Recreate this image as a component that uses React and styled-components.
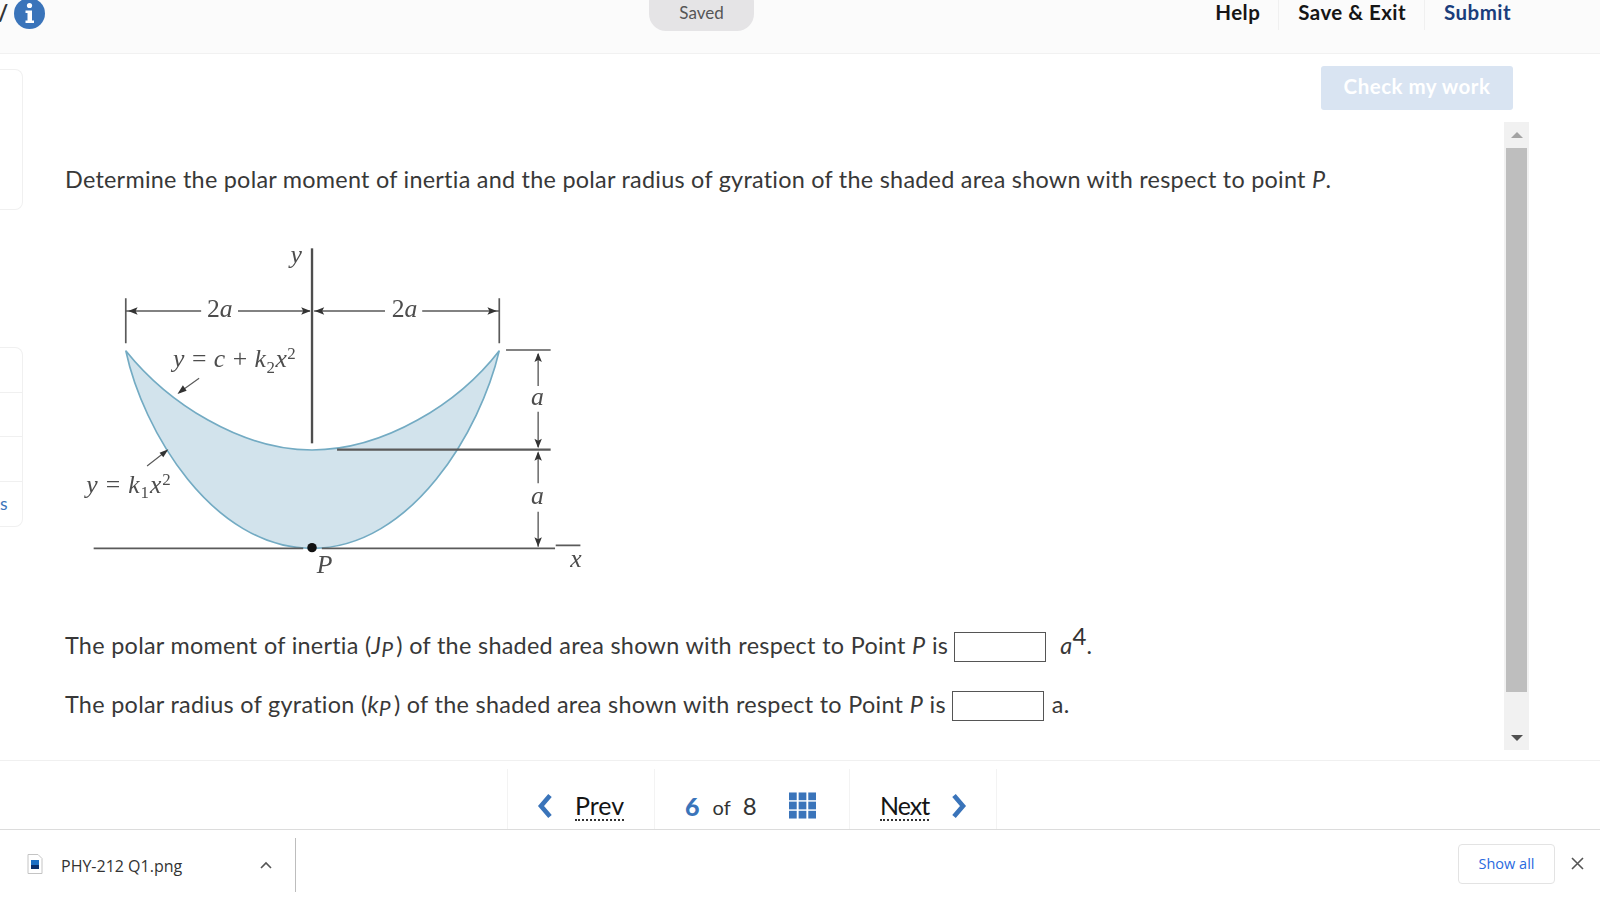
import React from "react";
import styled, { createGlobalStyle } from "styled-components";

const Global = createGlobalStyle`
  html, body { margin: 0; padding: 0; background: #fff; }
  body { font-family: "Lato", "Open Sans", sans-serif; color: #333; }
  * { box-sizing: border-box; }
`;

const Page = styled.div`
  width: 1600px;
  height: 900px;
  overflow: hidden;
  display: flex;
  flex-direction: column;
  background: #fff;
`;

const Header = styled.header`
  height: 54px;
  flex: none;
  display: flex;
  align-items: flex-start;
  background: #fbfbfb;
  border-bottom: 1px solid #f1f1f1;
  overflow: hidden;
`;
const Slash = styled.span`
  width: 16px;
  margin-left: -2px;
  padding-right: 0;
  font-size: 22px;
  font-weight: 700;
  line-height: 26px;
  color: #333;
  flex: none;
`;
const InfoIcon = styled.svg`
  width: 31px;
  height: 31px;
  margin-top: -2px;
  flex: none;
`;
const Saved = styled.div`
  margin-left: 604px;
  margin-top: -15px;
  width: 105px;
  height: 46px;
  padding-top: 15px;
  border-radius: 17px;
  background: #e5e4e6;
  color: #555;
  font-size: 17px;
  line-height: 25px;
  text-align: center;
`;
const HeaderNav = styled.nav`
  margin-left: auto;
  margin-right: 89px;
  display: flex;
`;
const HeaderLink = styled.a`
  font-size: 20.5px;
  font-weight: 700;
  letter-spacing: 0.45px;
  line-height: 25px;
  height: 30px;
  color: ${(p) => p.$color || "#151515"};
  padding: 0 18px 0 19px;
  border-left: ${(p) => (p.$first ? "none" : "1px solid #f0f0f0")};
  &:last-child { padding-right: 0; }
`;

const Main = styled.main`
  flex: 1;
  min-height: 0;
  display: flex;
`;
const Rail = styled.aside`
  width: 23px;
  flex: none;
  display: flex;
  flex-direction: column;
`;
const RailCard = styled.div`
  margin-top: ${(p) => p.$top}px;
  height: ${(p) => p.$height}px;
  border: 1px solid #f0f0f0;
  border-left: none;
  border-radius: 0 8px 8px 0;
  display: flex;
  flex-direction: column;
`;
const RailRow = styled.div`
  flex: 1;
  border-top: ${(p) => (p.$first ? "none" : "1px solid #f0f0f0")};
  color: #3a74ba;
  font-size: 17.5px;
  line-height: 44px;
`;
const Workspace = styled.div`
  flex: 1;
  min-width: 0;
  display: flex;
  flex-direction: column;
  padding: 12px 72px 10px 42px;
`;
const ActionRow = styled.div`
  display: flex;
  justify-content: flex-end;
  padding-right: 15px;
`;
const CheckButton = styled.button`
  width: 192px;
  height: 44px;
  padding: 0 0 5px;
  border: none;
  border-radius: 3px;
  background: #d9e4f2;
  color: #fff;
  font-family: inherit;
  font-size: 20.5px;
  font-weight: 700;
  letter-spacing: 0.5px;
`;
const QuestionRow = styled.div`
  flex: 1;
  min-height: 0;
  margin-top: 12px;
  display: flex;
`;
const Question = styled.div`
  flex: 1;
  min-width: 0;
  padding-top: 42px;
  font-size: 23.4px;
  letter-spacing: 0.26px;
  line-height: 30px;
  color: #383838;
`;
const Prompt = styled.p`
  margin: 0;
`;
const Figure = styled.svg`
  display: block;
  width: 530px;
  height: 360px;
  margin: 36px 0 0 5px;
  filter: blur(0.35px);
`;
const AnswerLine = styled.p`
  margin: ${(p) => p.$top}px 0 0;
  height: 30px;
  display: flex;
  align-items: center;
  white-space: pre;
  word-spacing: 0.2px;
`;
const Small = styled.span`
  font-size: 21px;
  font-style: italic;
  position: relative;
  top: 4px;
  margin-right: 3px;
`;
const Answer = styled.input`
  width: 92px;
  height: 30px;
  margin: 3px 0 0 ${(p) => p.$left}px;
  border: 1px solid #555;
  background: #fff;
  padding: 0;
`;
const Unit = styled.span`
  margin-left: ${(p) => p.$left}px;
`;
const Power = styled.span`
  font-size: 24px;
  position: relative;
  top: -9px;
  color: #333;
`;

const Scrollbar = styled.div`
  width: 25px;
  margin-right: -1px;
  flex: none;
  background: #f1f1f1;
  display: flex;
  flex-direction: column;
  align-items: center;
`;
const ScrollButton = styled.div`
  height: ${(p) => p.$height}px;
  flex: none;
  display: flex;
  align-items: center;
  justify-content: center;
`;
const ScrollThumb = styled.div`
  width: 21px;
  height: 544px;
  flex: none;
  background: #bebebe;
`;
const ScrollSpacer = styled.div`
  flex: 1;
`;
const Arrow = styled.div`
  width: 0;
  height: 0;
  border-left: 6px solid transparent;
  border-right: 6px solid transparent;
  ${(p) => (p.$down ? "border-top: 6px solid #505050;" : "border-bottom: 6px solid #a3a3a3;")}
`;

const Pager = styled.nav`
  height: 69px;
  flex: none;
  display: flex;
  padding: 8px 0 0 507px;
  border-top: 1px solid #f0f0f0;
`;
const PagerCell = styled.div`
  width: ${(p) => p.$width}px;
  display: flex;
  align-items: center;
  gap: ${(p) => p.$gap || 0}px;
  padding-top: 13px;
  padding-left: ${(p) => p.$pad || 0}px;
  border-left: 1px solid #f3f3f3;
  border-right: ${(p) => (p.$last ? "1px solid #f3f3f3" : "none")};
`;
const Chevron = styled.svg`
  width: 16px;
  height: 26px;
  flex: none;
`;
const PagerLink = styled.a`
  font-size: 25px;
  line-height: 28px;
  color: #151515;
  letter-spacing: ${(p) => p.$spacing || 0}px;
  border-bottom: 2px dotted #333;
`;
const Current = styled.span`
  font-size: 25px;
  font-weight: 900;
  color: #3a74ba;
`;
const Of = styled.span`
  font-size: 20px;
  color: #333;
  margin-top: 2px;
`;
const Total = styled.span`
  font-size: 24px;
  color: #333;
  margin-left: -1px;
`;
const GridIcon = styled.svg`
  width: 27px;
  height: 27px;
  margin-left: 19px;
  flex: none;
`;

const DownloadBar = styled.footer`
  height: 71px;
  flex: none;
  display: flex;
  align-items: center;
  background: #fff;
  border-top: 1px solid #dcdcdc;
`;
const DownloadItem = styled.div`
  width: 296px;
  height: 54px;
  flex: none;
  display: flex;
  align-items: center;
  padding-left: 27px;
  border-right: 1px solid #bdbdbd;
`;
const FileIcon = styled.svg`
  width: 16px;
  height: 20px;
  flex: none;
  margin-top: -3px;
`;
const FileName = styled.span`
  margin: 2px 0 0 18px;
  font-family: "Open Sans", sans-serif;
  font-size: 16px;
  color: #333;
`;
const Caret = styled.svg`
  width: 12px;
  height: 8px;
  margin-left: auto;
  margin-right: 23px;
  flex: none;
`;
const ShowAll = styled.button`
  margin-left: auto;
  margin-top: -2px;
  width: 97px;
  height: 40px;
  padding: 0 0 2px;
  border: 1px solid #e3e3e3;
  border-radius: 4px;
  background: #fff;
  color: #2a6ae0;
  font-family: "Open Sans", sans-serif;
  font-size: 14.5px;
`;
const CloseIcon = styled.svg`
  width: 13px;
  height: 13px;
  margin: -3px 16px 0 16px;
  flex: none;
`;

const Arrowhead = ({ x, y, dir }) => {
  const s = 28;
  const w = 11;
  const pts = {
    l: `${x},${y} ${x + s},${y - w} ${x + s - 6},${y} ${x + s},${y + w}`,
    r: `${x},${y} ${x - s},${y - w} ${x - s + 6},${y} ${x - s},${y + w}`,
    u: `${x},${y} ${x - w},${y + s} ${x},${y + s - 6} ${x + w},${y + s}`,
    d: `${x},${y} ${x - w},${y - s} ${x},${y - s + 6} ${x + w},${y - s}`,
  }[dir];
  return <polygon points={pts} fill="#333" />;
};

const serif = { fontFamily: '"Liberation Serif", serif', fill: "#4d4d4d" };
const Label = ({ x, y, size = 76, spacing = 0, italic = true, children }) => (
  <text x={x} y={y} fontSize={size} letterSpacing={spacing} fontStyle={italic ? "italic" : "normal"} style={serif}>
    {children}
  </text>
);

const lineStroke = { stroke: "#5a5a5a", strokeWidth: 5, fill: "none" };

const Diagram = () => (
  <Figure viewBox="0 0 1568 1080" preserveAspectRatio="none">
    <path
      d="M165 362 C 215 600 420 955 716 955 C 1012 955 1215 600 1270 362 C 1150 520 930 660 716 660 C 505 660 290 520 165 362 Z"
      fill="#d2e3ec"
      stroke="#73abc3"
      strokeWidth="5"
    />
    <path d="M716 55V640" stroke="#4e4e4e" strokeWidth="7" fill="none" />
    <path d="M165 205V340M1270 205V340" {...lineStroke} />
    <path d="M165 243H388M497 243H710M722 243H932M1042 243H1270" {...lineStroke} strokeWidth="4" />
    <Arrowhead x={172} y={243} dir="l" />
    <Arrowhead x={712} y={243} dir="r" />
    <Arrowhead x={724} y={243} dir="l" />
    <Arrowhead x={1263} y={243} dir="r" />
    <path d="M790 659H1422" stroke="#5a5a5a" strokeWidth="7" fill="none" />
    <path d="M1290 360H1422M70 955H690M745 955H1435M1437 946H1510" {...lineStroke} />
    <path d="M1385 372V468M1385 545V652M1385 668V760M1385 845V950" {...lineStroke} strokeWidth="4" />
    <Arrowhead x={1385} y={368} dir="u" />
    <Arrowhead x={1385} y={654} dir="d" />
    <Arrowhead x={1385} y={664} dir="u" />
    <Arrowhead x={1385} y={950} dir="d" />
    <path d="M382 445L325 486M228 708L284 664" {...lineStroke} strokeWidth="3.5" />
    <polygon points="318,492 334,466 345,482" fill="#333" />
    <polygon points="291,658 276,682 265,668" fill="#333" />
    <circle cx="716" cy="953" r="14" fill="#111" />
    <Label x={652} y={98}>y</Label>
    <Label x={405} y={262} italic={false}>2<tspan fontStyle="italic">a</tspan></Label>
    <Label x={952} y={262} italic={false}>2<tspan fontStyle="italic">a</tspan></Label>
    <Label x={305} y={410} spacing={1.5}>
      y <tspan fontStyle="normal">= </tspan>c <tspan fontStyle="normal">+ </tspan>k
      <tspan fontSize="50" dy="18" fontStyle="normal">2</tspan>
      <tspan dy="-18">x</tspan>
      <tspan fontSize="50" dy="-22" fontStyle="normal">2</tspan>
    </Label>
    <Label x={48} y={790} spacing={2.5}>
      y <tspan fontStyle="normal">= </tspan>k
      <tspan fontSize="50" dy="14" fontStyle="normal">1</tspan>
      <tspan dy="-14">x</tspan>
      <tspan fontSize="50" dy="-24" fontStyle="normal">2</tspan>
    </Label>
    <Label x={1364} y={525}>a</Label>
    <Label x={1364} y={822}>a</Label>
    <Label x={730} y={1028}>P</Label>
    <Label x={1480} y={1012}>x</Label>
  </Figure>
);

export default function App() {
  return (
    <Page>
      <Global />
      <Header>
        <Slash>/</Slash>
        <InfoIcon viewBox="0 0 31 31">
          <circle cx="15.5" cy="15.5" r="15.5" fill="#3a74ba" />
          <circle cx="15.5" cy="7.5" r="2.6" fill="#fff" />
          <path d="M11.5 12.5H18V22.5H20V25H11.5V22.5H13.5V15H11.5Z" fill="#fff" />
        </InfoIcon>
        <Saved>Saved</Saved>
        <HeaderNav>
          <HeaderLink $first>Help</HeaderLink>
          <HeaderLink>Save &amp; Exit</HeaderLink>
          <HeaderLink $color="#1a3d7c">Submit</HeaderLink>
        </HeaderNav>
      </Header>
      <Main>
        <Rail>
          <RailCard $top={15} $height={141} />
          <RailCard $top={137} $height={180}>
            <RailRow $first />
            <RailRow />
            <RailRow />
            <RailRow>s</RailRow>
          </RailCard>
        </Rail>
        <Workspace>
          <ActionRow>
            <CheckButton>Check my work</CheckButton>
          </ActionRow>
          <QuestionRow>
            <Question>
              <Prompt>
                Determine the polar moment of inertia and the polar radius of gyration of the shaded area shown with
                respect to point <i>P</i>.
              </Prompt>
              <Diagram />
              <AnswerLine $top={40}>
                The polar moment of inertia (<i>J</i><Small>P</Small>) of the shaded area shown with respect to Point <i>P</i> is
                <Answer $left={6} aria-label="polar moment" />
                <Unit $left={14}><i>a</i><Power>4</Power>.</Unit>
              </AnswerLine>
              <AnswerLine $top={29}>
                The polar radius of gyration (<i>k</i><Small>P</Small>) of the shaded area shown with respect to Point <i>P</i> is
                <Answer $left={6} aria-label="polar radius" />
                <Unit $left={8}>a.</Unit>
              </AnswerLine>
            </Question>
            <Scrollbar>
              <ScrollButton $height={26}><Arrow /></ScrollButton>
              <ScrollThumb />
              <ScrollSpacer />
              <ScrollButton $height={24}><Arrow $down /></ScrollButton>
            </Scrollbar>
          </QuestionRow>
        </Workspace>
      </Main>
      <Pager>
        <PagerCell $width={147} $pad={29} $gap={22}>
          <Chevron viewBox="0 0 16 26"><path d="M13 2.5L4 13L13 23.5" fill="none" stroke="#3a74ba" strokeWidth="4.6" /></Chevron>
          <PagerLink>Prev</PagerLink>
        </PagerCell>
        <PagerCell $width={195} $pad={30} $gap={13}>
          <Current>6</Current>
          <Of>of</Of>
          <Total>8</Total>
          <GridIcon viewBox="0 0 28 27" fill="#3a74ba">
            <rect x="0" y="0" width="8" height="8" /><rect x="10" y="0" width="8" height="8" /><rect x="20" y="0" width="8" height="8" />
            <rect x="0" y="9.5" width="8" height="8" /><rect x="10" y="9.5" width="8" height="8" /><rect x="20" y="9.5" width="8" height="8" />
            <rect x="0" y="19" width="8" height="8" /><rect x="10" y="19" width="8" height="8" /><rect x="20" y="19" width="8" height="8" />
          </GridIcon>
        </PagerCell>
        <PagerCell $width={148} $pad={30} $gap={22} $last>
          <PagerLink $spacing={-1}>Next</PagerLink>
          <Chevron viewBox="0 0 16 26"><path d="M3 2.5L12 13L3 23.5" fill="none" stroke="#3a74ba" strokeWidth="4.6" /></Chevron>
        </PagerCell>
      </Pager>
      <DownloadBar>
        <DownloadItem>
          <FileIcon viewBox="0 0 16 20">
            <path d="M1 .5H11L15 4.5V19.5H1Z" fill="#fff" stroke="#c4c4c4" />
            <rect x="4" y="6" width="8" height="9" fill="#1d6fc4" />
            <rect x="4" y="11" width="8" height="4" fill="#0b2f6b" />
          </FileIcon>
          <FileName>PHY-212 Q1.png</FileName>
          <Caret viewBox="0 0 12 8"><path d="M1 7L6 2L11 7" fill="none" stroke="#555" strokeWidth="1.6" /></Caret>
        </DownloadItem>
        <ShowAll>Show all</ShowAll>
        <CloseIcon viewBox="0 0 13 13"><path d="M1 1L12 12M12 1L1 12" stroke="#555" strokeWidth="1.6" /></CloseIcon>
      </DownloadBar>
    </Page>
  );
}
